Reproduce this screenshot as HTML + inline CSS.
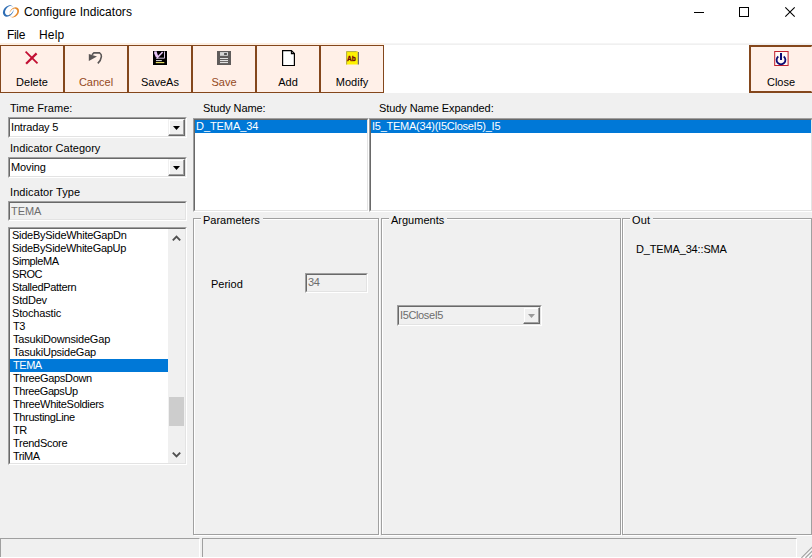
<!DOCTYPE html>
<html><head><meta charset="utf-8"><title>Configure Indicators</title>
<style>
html,body{margin:0;padding:0;}
body{width:812px;height:558px;overflow:hidden;background:#f0f0f0;position:relative;font-family:"Liberation Sans",Arial,sans-serif;font-size:11px;color:#000;}
.abs{position:absolute;}
.t{position:absolute;white-space:nowrap;line-height:13px;height:13px;}
#title{left:0;top:0;width:812px;height:24px;background:#fff;}
#menu{left:0;top:24px;width:812px;height:20px;background:#fff;}
#tb{left:0;top:44px;width:812px;height:49px;background:#fff;}
.btn{position:absolute;top:45px;width:62px;height:46px;border:1px solid #84471c;background:#fff0e8;}
.btn .lb{position:absolute;left:0;right:0;top:29.6px;text-align:center;font-size:11px;line-height:13px;}
.btn svg{position:absolute;left:23px;top:4px;}
.br{color:#94491c;}
.sunken{position:absolute;box-sizing:border-box;border:1px solid;border-color:#a0a0a0 #fff #fff #a0a0a0;}
.sunken>.in{position:absolute;left:0;top:0;right:0;bottom:0;border:1px solid;border-color:#696969 #e3e3e3 #e3e3e3 #696969;background:#fff;}
.gb{position:absolute;box-sizing:border-box;border:1px solid #a0a0a0;box-shadow:1px 1px 0 #fff, inset 1px 1px 0 #fff;}
.gb .cap{position:absolute;top:-5px;left:7px;background:#f0f0f0;padding:0 3px 0 2px;line-height:13px;height:13px;white-space:nowrap}
.li{position:absolute;left:1px;height:13px;line-height:13px;white-space:nowrap;padding-left:2px;box-sizing:border-box}
.sel{background:#0078d7;color:#fff;}
.dd{position:absolute;top:1px;width:15px;height:15px;right:1px;background:#f0f0f0;border:1px solid;border-color:#f0f0f0 #696969 #696969 #f0f0f0;box-shadow:inset -1px -1px 0 #a0a0a0, inset 1px 1px 0 #fff}
</style></head><body>
<div id="title" class="abs">
<svg class="abs" style="left:0px;top:0px" width="24" height="24" viewBox="0 0 24 24">
<g transform="rotate(-50 8.3 11)"><path fill-rule="evenodd" fill="#2e6db4" d="M2.0 11a6.3 4.7 0 1 0 12.6 0a6.3 4.7 0 1 0 -12.6 0ZM4.0 11.5a5.3 3.5 0 1 1 10.6 0a5.3 3.5 0 1 1 -10.6 0Z"/></g>
<g transform="rotate(-50 14.2 12.4)"><path fill-rule="evenodd" fill="#e58a2c" d="M8.6 12.4a5.6 4.2 0 1 0 11.2 0a5.6 4.2 0 1 0 -11.2 0ZM8.6 11.9a4.7 3.1 0 1 1 9.4 0a4.7 3.1 0 1 1 -9.4 0Z"/></g>
</svg>
<div class="t" style="left:24px;top:4px;font-size:12px;line-height:16px;height:16px"><span id="ttl" style="letter-spacing:0.026px;">Configure Indicators</span></div>
<svg class="abs" style="left:690px;top:2px" width="110" height="20" viewBox="0 0 110 20" fill="none" stroke="#000" stroke-width="1">
<path d="M4 10.5H14"/><rect x="49.5" y="5.5" width="9" height="9"/><path d="M95.3 5.3L104.7 14.7M104.7 5.3L95.3 14.7" stroke-width="1.1"/>
</svg>
</div>
<div id="menu" class="abs">
<div class="t" style="left:7px;top:4px;font-size:12px;line-height:15px;height:15px"><span id="mfile" style="letter-spacing:-0.333px;">File</span></div>
<div class="t" style="left:39px;top:4px;font-size:12px;line-height:15px;height:15px"><span id="mhelp" style="letter-spacing:0.150px;">Help</span></div>
</div>
<div id="tb" class="abs"></div>
<div class="abs" style="left:0;top:43px;width:812px;height:1px;background:#f5f5f5"></div><div class="abs" style="left:0;top:44px;width:812px;height:1px;background:#f0f0f0"></div><div class="abs" style="left:0;top:43px;width:384px;height:2px;background:#fdefe2"></div>
<div class="btn" style="left:0px"><svg width="16" height="16" viewBox="0 0 16 16"><path d="M1.6 1.6L13.5 13.3" stroke="#c20f33" stroke-width="1.8" fill="none"/><path d="M12.6 3.4L2.1 13.7" stroke="#c20f33" stroke-width="2.2" fill="none"/></svg><div class="lb "><span>Delete</span></div></div>
<div class="btn" style="left:64px"><svg width="16" height="16" viewBox="0 0 16 16"><g transform="translate(0,1)"><path d="M0.8 3V10.1L9 5.4Z" fill="#5a5656"/><path d="M4 3.8L5.9 1.9H11.6Q13.7 3.2 13.4 5.6Q13 9.2 9.8 12.4" stroke="#5a5656" stroke-width="1.6" fill="none"/></g></svg><div class="lb br"><span>Cancel</span></div></div>
<div class="btn" style="left:128px"><svg width="16" height="16" viewBox="0 0 16 16"><g transform="translate(0,0)"><rect x="0.5" y="0.5" width="15" height="15" fill="#fff" opacity=".7"/><rect x="1" y="1" width="14" height="14" fill="#000"/><path d="M2.2 2.2L4 2L5.6 7.2L9.5 3.2L10.6 2" stroke="#e6c4f6" stroke-width="1.6" fill="none"/><path d="M3 2.5L5 7" stroke="#e6c4f6" stroke-width="2.2" fill="none"/><path d="M4 8.2H12.5V1.5" stroke="#ecd8f8" stroke-width="0.9" fill="none"/><path d="M4 10.6H9.8" stroke="#fff" stroke-width="0.9"/><path d="M3.8 12.6H12.3" stroke="#f2e86a" stroke-width="1.1"/></g></svg><div class="lb "><span>SaveAs</span></div></div>
<div class="btn" style="left:192px"><svg width="16" height="16" viewBox="0 0 16 16"><rect x="1" y="1" width="14" height="14" fill="#5f5c5b"/><rect x="4" y="2.1" width="8" height="3.7" fill="#d6d6d6"/><rect x="8.1" y="3.1" width="2.8" height="1.8" fill="#444"/><rect x="4" y="8" width="8" height="1" fill="#e0e0e0"/><rect x="4" y="10" width="8" height="1.1" fill="#e0e0e0"/><rect x="4" y="12" width="8" height="1.1" fill="#e0e0e0"/></svg><div class="lb br"><span>Save</span></div></div>
<div class="btn" style="left:256px"><svg width="16" height="17" viewBox="0 0 16 17"><path d="M2.6 0.6H11.4L14.4 3.6V15.5H2.6Z" fill="#fff" stroke="#000" stroke-width="1.2"/><path d="M11.4 0.6V3.6H14.4" fill="none" stroke="#000" stroke-width="1.1"/></svg><div class="lb "><span>Add</span></div></div>
<div class="btn" style="left:320px"><svg width="16" height="16" viewBox="0 0 16 16"><rect x="2.2" y="1.2" width="11.6" height="13.3" fill="#fff200"/><path d="M2.6 14.5V1.6H12.5" stroke="#a5a250" stroke-width="0.9" fill="none"/><path d="M14.3 2V14.5" stroke="#4c4c4c" stroke-width="1"/><text x="3.1" y="10.5" font-family="Liberation Sans,sans-serif" font-weight="bold" font-size="8" fill="#6e0808" stroke="#6e0808" stroke-width="0.35" textLength="8.8" lengthAdjust="spacingAndGlyphs">Ab</text></svg><div class="lb "><span>Modify</span></div></div>
<div class="btn" style="left:749px;border-width:2px;border-right-color:transparent;width:60px;height:44px;"><svg style="left:22px;top:3px" width="16" height="17" viewBox="0 0 16 17"><rect x="1.7" y="1.5" width="13.4" height="14" fill="#fff8f6" stroke="#c0202e" stroke-width="1"/><path d="M8 3.1V9.9" stroke="#0a0a72" stroke-width="2" fill="none"/><path d="M5.3 6.5A4.4 4.4 0 1 0 10.7 6.5" stroke="#0a0a72" stroke-width="1.8" fill="none"/></svg><div class="lb" style="top:28.6px"><span>Close</span></div></div>

<!-- left panel -->
<div class="t" style="left:10px;top:102px"><span id="l1" style="letter-spacing:0.050px;">Time Frame:</span></div>
<div class="sunken" style="left:8px;top:117px;width:179px;height:21px"><div class="in"></div>
<div class="t" style="left:2px;top:3px"><span id="c1" style="letter-spacing:-0.167px;">Intraday 5</span></div><div class="dd"><svg class="abs" style="left:4px;top:6px" width="7" height="4"><path d="M0 0H7L3.5 4Z" fill="#000"/></svg></div>
</div>
<div class="t" style="left:10px;top:142px"><span id="l2" style="letter-spacing:0.029px;">Indicator Category</span></div>
<div class="sunken" style="left:8px;top:157px;width:179px;height:21px"><div class="in"></div>
<div class="t" style="left:2px;top:3px"><span id="c2" style="letter-spacing:-0.120px;">Moving</span></div><div class="dd"><svg class="abs" style="left:4px;top:6px" width="7" height="4"><path d="M0 0H7L3.5 4Z" fill="#000"/></svg></div>
</div>
<div class="t" style="left:10px;top:186px"><span id="l3" style="letter-spacing:0.092px;">Indicator Type</span></div>
<div class="sunken" style="left:8px;top:201px;width:179px;height:20px"><div class="in" style="background:#f0f0f0"></div>
<div class="t" style="left:2px;top:3px;color:#6d6d6d"><span id="c3" style="letter-spacing:-0.067px;">TEMA</span></div>
</div>
<div class="sunken" style="left:8px;top:227px;width:179px;height:238px"><div class="in"></div>
<div class="li" style="top:1px;width:158px"><span id="li0" style="letter-spacing:-0.263px;">SideBySideWhiteGapDn</span></div>
<div class="li" style="top:14px;width:158px"><span id="li1" style="letter-spacing:-0.289px;">SideBySideWhiteGapUp</span></div>
<div class="li" style="top:27px;width:158px"><span id="li2" style="letter-spacing:-0.450px;">SimpleMA</span></div>
<div class="li" style="top:40px;width:158px"><span id="li3" style="letter-spacing:-0.450px;">SROC</span></div>
<div class="li" style="top:53px;width:158px"><span id="li4" style="letter-spacing:-0.346px;">StalledPattern</span></div>
<div class="li" style="top:66px;width:158px"><span id="li5" style="letter-spacing:-0.200px;">StdDev</span></div>
<div class="li" style="top:79px;width:158px"><span id="li6" style="letter-spacing:-0.167px;">Stochastic</span></div>
<div class="li" style="top:92px;width:158px"><span id="li7" style="letter-spacing:-0.450px;margin-left:1px;">T3</span></div>
<div class="li" style="top:105px;width:158px"><span id="li8" style="letter-spacing:-0.188px;margin-left:1px;">TasukiDownsideGap</span></div>
<div class="li" style="top:118px;width:158px"><span id="li9" style="letter-spacing:-0.214px;margin-left:1px;">TasukiUpsideGap</span></div>
<div class="li sel" style="top:131px;width:158px"><span id="li10" style="letter-spacing:-0.450px;margin-left:1px;">TEMA</span></div>
<div class="li" style="top:144px;width:158px"><span id="li11" style="letter-spacing:-0.333px;margin-left:1px;">ThreeGapsDown</span></div>
<div class="li" style="top:157px;width:158px"><span id="li12" style="letter-spacing:-0.400px;margin-left:1px;">ThreeGapsUp</span></div>
<div class="li" style="top:170px;width:158px"><span id="li13" style="letter-spacing:-0.324px;margin-left:1px;">ThreeWhiteSoldiers</span></div>
<div class="li" style="top:183px;width:158px"><span id="li14" style="letter-spacing:-0.375px;margin-left:1px;">ThrustingLine</span></div>
<div class="li" style="top:196px;width:158px"><span id="li15" style="letter-spacing:-0.450px;margin-left:1px;">TR</span></div>
<div class="li" style="top:209px;width:158px"><span id="li16" style="letter-spacing:-0.278px;margin-left:1px;">TrendScore</span></div>
<div class="li" style="top:222px;width:158px"><span id="li17" style="letter-spacing:-0.450px;margin-left:1px;">TriMA</span></div>

<div class="abs" style="left:159px;top:1px;width:17px;height:234px;background:#f0f0f0">
<div class="abs" style="left:1px;top:168px;width:15px;height:29px;background:#cdcdcd"></div>
<svg class="abs" style="left:4px;top:6px" width="9" height="8"><path d="M0.8 5.4L4.5 1.6L8.2 5.4" stroke="#505050" stroke-width="1.9" fill="none"/></svg>
<svg class="abs" style="left:4px;top:222px" width="9" height="8"><path d="M0.8 1.6L4.5 5.4L8.2 1.6" stroke="#505050" stroke-width="1.9" fill="none"/></svg>
</div>
</div>

<!-- right top -->
<div class="t" style="left:203px;top:102px"><span id="l4" style="letter-spacing:-0.100px;">Study Name:</span></div>
<div class="t" style="left:379px;top:102px"><span id="l5" style="letter-spacing:-0.079px;">Study Name Expanded:</span></div>
<div class="sunken" style="left:193px;top:118px;width:176px;height:94px"><div class="in"></div>
<div class="li sel" style="top:1px;width:172px;padding-left:1px"><span id="s1" style="letter-spacing:-0.063px;">D_TEMA_34</span></div></div>
<div class="sunken" style="left:369px;top:118px;width:444px;height:94px"><div class="in"></div>
<div class="li sel" style="top:1px;width:440px;padding-left:1px"><span id="s2" style="letter-spacing:-0.250px;">I5_TEMA(34)(I5CloseI5)_I5</span></div></div>

<div class="gb" style="left:193px;top:218px;width:186px;height:317px"><div class="cap"><span id="g1" style="letter-spacing:-0.000px;">Parameters</span></div></div>
<div class="gb" style="left:381px;top:218px;width:240px;height:317px"><div class="cap"><span id="g2" style="letter-spacing:-0.000px;">Arguments</span></div></div>
<div class="gb" style="left:622px;top:218px;width:190px;height:317px"><div class="cap"><span id="g3" style="letter-spacing:0.150px;">Out</span></div></div>

<div class="t" style="left:211px;top:278px"><span id="p1" style="letter-spacing:-0.000px;">Period</span></div>
<div class="sunken" style="left:305px;top:273px;width:63px;height:20px"><div class="in" style="background:#f0f0f0"></div>
<div class="t" style="left:2px;top:2px;color:#6d6d6d"><span id="p2" style="letter-spacing:-0.450px;">34</span></div></div>

<div class="sunken" style="left:397px;top:305px;width:145px;height:21px"><div class="in" style="background:#f0f0f0"></div>
<div class="t" style="left:2px;top:3px;color:#6d6d6d"><span id="a1" style="letter-spacing:-0.375px;">I5CloseI5</span></div><div class="dd"><svg class="abs" style="left:4px;top:6px" width="7" height="4"><path d="M0 0H7L3.5 4Z" fill="#9a9a9a"/></svg></div>
</div>
<div class="t" style="left:636px;top:243px"><span id="o1" style="letter-spacing:-0.154px;">D_TEMA_34::SMA</span></div>

<!-- status bar -->
<div class="abs" style="left:0;top:538px;width:200px;height:20px;box-sizing:border-box;border:1px solid;border-color:#a0a0a0 #fff #fff #a0a0a0"></div>
<div class="abs" style="left:202px;top:538px;width:595px;height:20px;box-sizing:border-box;border:1px solid;border-color:#a0a0a0 #fff #fff #a0a0a0"></div>
<div class="abs" style="left:0;top:557px;width:812px;height:1px;background:#fff"></div>
<svg class="abs" style="left:799px;top:544px" width="14" height="14"><path d="M14.5 2L2.5 14M14.5 6L6.5 14M14.5 10L10.5 14" stroke="#a0a0a0" stroke-width="1.3"/><path d="M14.5 3.2L3.7 14M14.5 7.2L7.7 14M14.5 11.2L11.7 14" stroke="#fff" stroke-width="0.9"/></svg>
</body></html>
